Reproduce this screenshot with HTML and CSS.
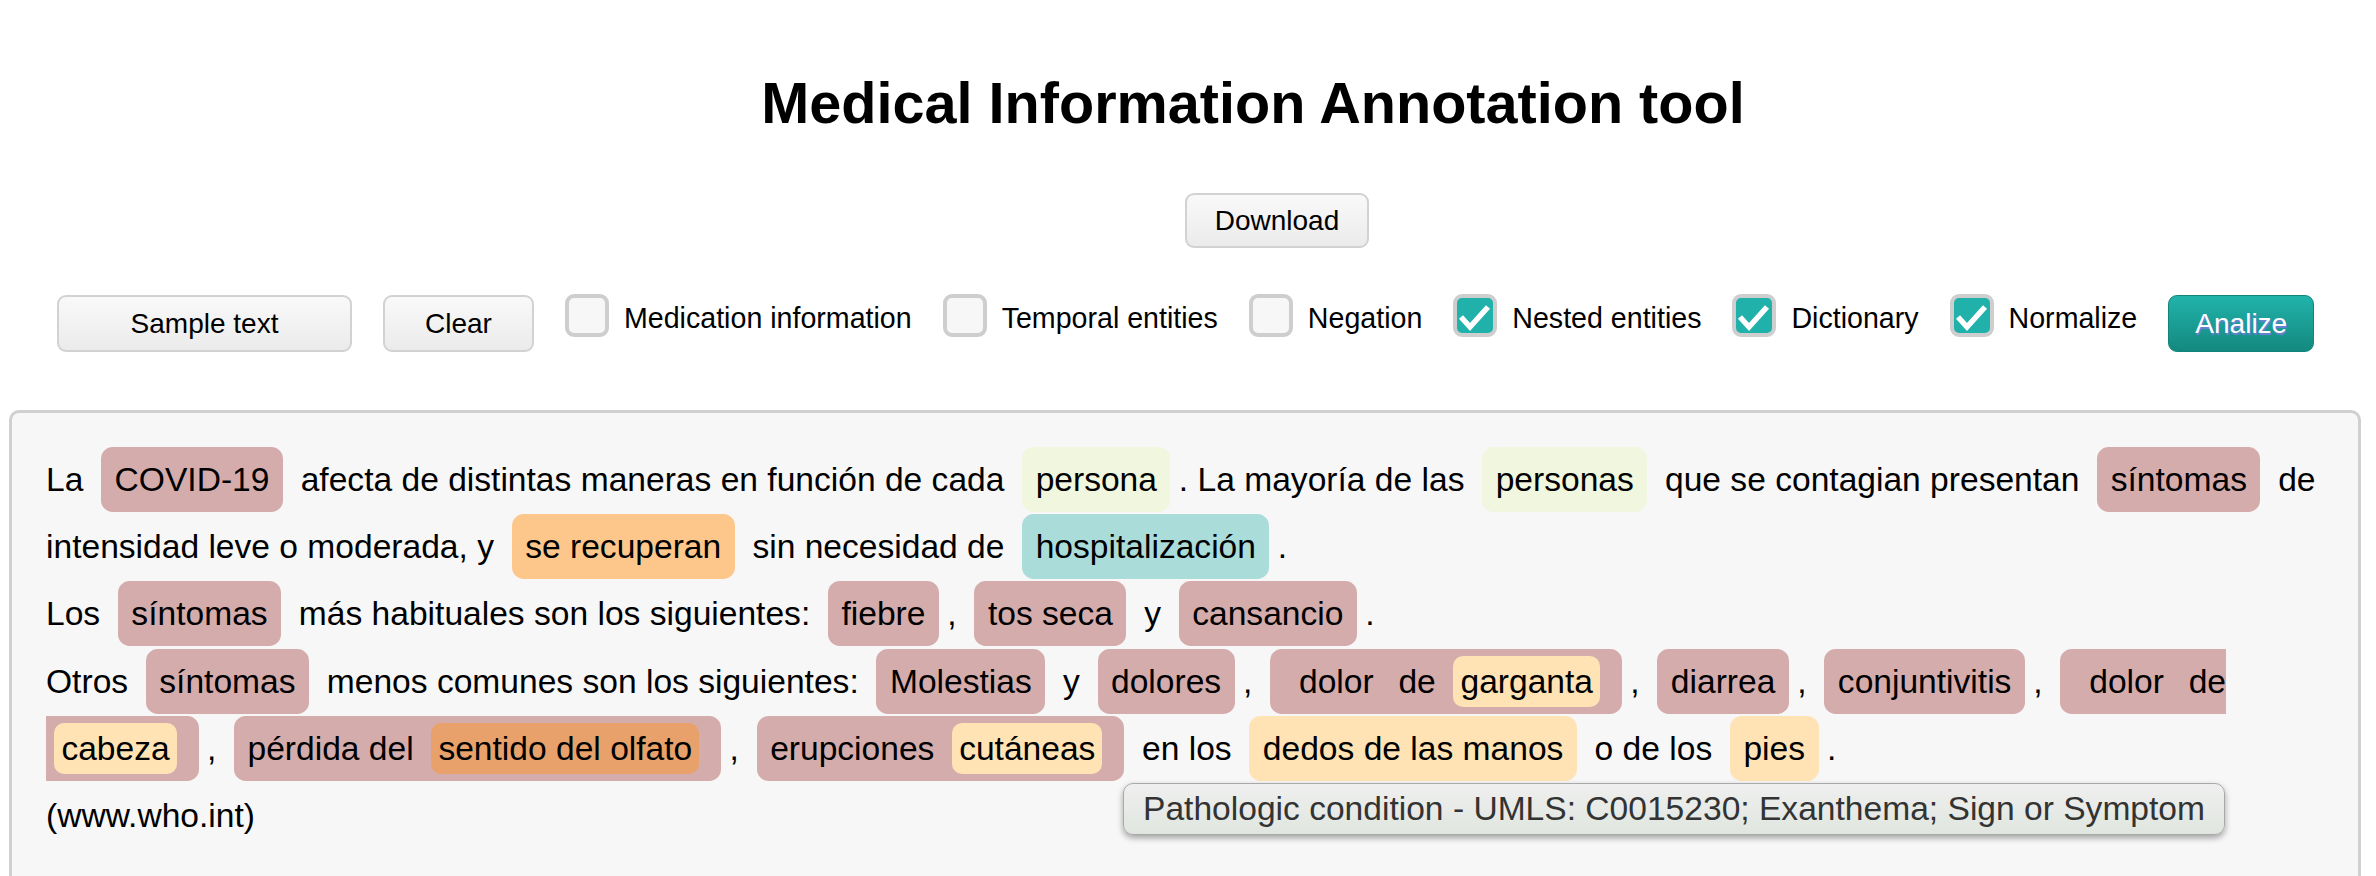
FILE: index.html
```html
<!DOCTYPE html>
<html lang="es">
<head>
<meta charset="utf-8">
<title>Medical Information Annotation tool</title>
<link rel="stylesheet" href="styles.css">
</head>
<body>
<header class="header">
  <h1 class="title">Medical Information Annotation tool</h1>
  <div class="dl-row"><button class="btn btn-dl">Download</button></div>
</header>
<div class="toolbar">
  <button class="btn btn-sample">Sample text</button>
  <button class="btn btn-clear">Clear</button>
  <label class="opt"><span class="cb"></span><span class="lbl">Medication information</span></label>
  <label class="opt"><span class="cb"></span><span class="lbl">Temporal entities</span></label>
  <label class="opt"><span class="cb"></span><span class="lbl">Negation</span></label>
  <label class="opt"><span class="cb on"><svg viewBox="0 0 36 35" width="36" height="35"><polyline points="4,19 13,29 31,9" fill="none" stroke="#fff" stroke-width="5.5"/></svg></span><span class="lbl">Nested entities</span></label>
  <label class="opt"><span class="cb on"><svg viewBox="0 0 36 35" width="36" height="35"><polyline points="4,19 13,29 31,9" fill="none" stroke="#fff" stroke-width="5.5"/></svg></span><span class="lbl">Dictionary</span></label>
  <label class="opt"><span class="cb on"><svg viewBox="0 0 36 35" width="36" height="35"><polyline points="4,19 13,29 31,9" fill="none" stroke="#fff" stroke-width="5.5"/></svg></span><span class="lbl">Normalize</span></label>
  <button class="btn btn-go">Analize</button>
</div>
<div class="box">
  <div class="text">La <mark class="e path">COVID-19</mark> afecta de distintas maneras en función de cada <mark class="e pers">persona</mark>. La mayoría de las <mark class="e pers">personas</mark> que se contagian presentan <mark class="e path">síntomas</mark> de intensidad leve o moderada, y <mark class="e proc">se recuperan</mark> sin necesidad de <mark class="e hosp">hospitalización</mark>.<br>Los <mark class="e path">síntomas</mark> más habituales son los siguientes: <mark class="e path">fiebre</mark>, <mark class="e path">tos seca</mark> y <mark class="e path">cansancio</mark>.<br>Otros <mark class="e path">síntomas</mark> menos comunes son los siguientes: <mark class="e path">Molestias</mark> y <mark class="e path">dolores</mark>, <mark class="e path"><mark class="i none">dolor</mark> de <mark class="i anat">garganta</mark></mark>, <mark class="e path">diarrea</mark>, <mark class="e path">conjuntivitis</mark>, <mark class="e path"><mark class="i none">dolor</mark> de <mark class="i anat">cabeza</mark></mark>, <mark class="e path">pérdida del <mark class="i func">sentido del olfato</mark></mark>, <mark class="e path">erupciones <mark class="i anat">cutáneas</mark></mark> en los <mark class="e anat">dedos de las manos</mark> o de los <mark class="e anat">pies</mark>.<br>(www.who.int)</div>
  <div class="tooltip">Pathologic condition - UMLS: C0015230; Exanthema; Sign or Symptom</div>
</div>
</body>
</html>
```
FILE: styles.css
```css
html, body {
  margin: 0;
  padding: 0;
  background: #ffffff;
  color: #000000;
  font-family: "Liberation Sans", Arial, Helvetica, sans-serif;
}

.header {
  padding-top: 70px;
}

.title {
  margin: 0;
  padding-left: 130px;
  text-align: center;
  font-size: 57.6px;
  font-weight: bold;
  line-height: normal;
}

.dl-row {
  display: flex;
  justify-content: center;
  padding-left: 178px;
  margin-top: 57px;
}

.btn {
  box-sizing: border-box;
  font-family: "Liberation Sans", Arial, Helvetica, sans-serif;
  font-size: 28px;
  line-height: normal;
  color: #000;
  background: linear-gradient(#f9f9f9, #ebebeb);
  border: 2px solid #d2d2d2;
  border-radius: 9px;
  padding: 0;
  margin: 0;
  cursor: pointer;
}

.btn-dl {
  width: 184px;
  height: 55px;
}

.toolbar {
  display: flex;
  align-items: flex-start;
  gap: 31px;
  margin-top: 46px;
  padding-left: 57px;
  height: 58px;
}

.btn-sample {
  width: 295px;
  height: 57px;
  margin-top: 1px;
}

.btn-clear {
  width: 151px;
  height: 57px;
  margin-top: 1px;
}

.btn-go {
  width: 146px;
  height: 57px;
  margin-top: 1px;
  color: #fff;
  background: linear-gradient(#21b3aa, #13897f);
  border: 1px solid #11857b;
  text-shadow: 1px 2px 1px #6f7fd6;
}

.opt {
  display: flex;
  align-items: flex-start;
  gap: 15px;
}

.cb {
  box-sizing: border-box;
  width: 44px;
  height: 43px;
  border: 4px solid #cecece;
  border-radius: 9px;
  background: #f7f7f7;
  display: flex;
  align-items: center;
  justify-content: center;
}

.cb.on {
  background: #20b2aa;
}

.lbl {
  font-size: 28.6px;
  line-height: normal;
  margin-top: 8px;
  white-space: nowrap;
}

.box {
  position: relative;
  box-sizing: border-box;
  width: 2352px;
  margin: 58px 0 0 9px;
  border: 3px solid #d0d0d0;
  border-radius: 10px;
  background: #f7f7f7;
  padding: 33px 34px 40px;
}

.text {
  font-size: 33.6px;
  line-height: 67.2px;
}

mark {
  color: #000;
  line-height: 1;
  margin: 0 0.25em;
}

mark.e {
  padding: 14px 13.5px;
  border-radius: 0.35em;
}

mark.i {
  padding: 7px;
  border-radius: 0.3em;
}

.path { background: #d5acac; }
.pers { background: #f1f6de; }
.proc { background: #fdc78c; }
.hosp { background: #aadcda; }
.anat { background: #ffe3b4; }
.func { background: #e8a16a; }
.none { background: transparent; }

.tooltip {
  position: absolute;
  left: 1111px;
  top: 370px;
  font-size: 33.6px;
  line-height: normal;
  padding: 6px 19px;
  border: 1px solid #a9a9a9;
  border-radius: 10px;
  background: linear-gradient(#efefef, #e0e6df);
  color: #333;
  box-shadow: 0 3px 6px rgba(0, 0, 0, 0.35);
  white-space: nowrap;
}
```
